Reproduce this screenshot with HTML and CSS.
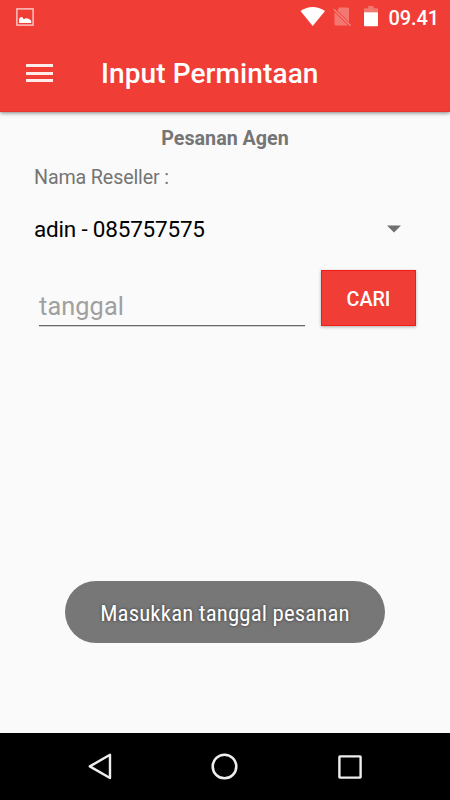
FILE: index.html
```
<!DOCTYPE html>
<html lang="id">
<head>
<meta charset="utf-8">
<title>Input Permintaan</title>
<link rel="stylesheet" href="styles.css">
</head>
<body>
<div class="screen">
  <header class="top">
    <div class="status">
      <svg class="status-picture" width="18" height="18" viewBox="0 0 18 18"><rect x=".9" y=".9" width="16.2" height="16.2" fill="none" stroke="#fff" stroke-opacity=".8" stroke-width="1.3"/><path d="M3 15V11Q4 9 5.6 9Q6.8 9 7.6 11.2Q9 10.2 11.2 10.2Q14.5 11.5 15.2 12.8V15z" fill="#fff"/></svg>
      <div class="status-right">
        <svg class="wifi" width="26" height="20" viewBox="0 0 26 20"><path d="M.5 5Q12.7-3.2 25 5L12.7 20z" fill="#fff"/></svg>
        <svg class="nosim" width="19" height="20" viewBox="0 0 19 20"><path d="M6.3 .6H14.5Q16 .6 16 2.1V15L4.3 3.4zM1.5 5 15 18.5H3Q1.5 18.5 1.5 17z" fill="#fff" fill-opacity=".3"/><path d="M.8 2.2 17.5 18.6" stroke="#fff" stroke-opacity=".35" stroke-width="1.5"/></svg>
        <svg class="battery" width="14" height="21" viewBox="0 0 14 21"><path d="M0 6.2V3.2Q0 2.3 1 2.3H4.3V0H9.5V2.3H13Q14 2.3 14 3.2V6.2z" fill="#fff" fill-opacity=".3"/><path d="M0 6.2H14V19.5Q14 20.3 13 20.3H1Q0 20.3 0 19.5z" fill="#fff"/></svg>
        <span class="clock">09.41</span>
      </div>
    </div>
    <div class="bar">
      <div class="menu"><i></i><i></i><i></i></div>
      <h1>Input Permintaan</h1>
    </div>
  </header>
  <main class="content">
    <h2>Pesanan Agen</h2>
    <p class="label">Nama Reseller :</p>
    <div class="spinner"><span>adin - 085757575</span><svg width="14" height="8" viewBox="0 0 14 8"><path d="M0 .4H14L7 7.4z" fill="#6f6f6f"/></svg></div>
    <div class="search">
      <div class="field">tanggal</div>
      <button class="submit">CARI</button>
    </div>
    <div class="toast"><span>Masukkan tanggal pesanan</span></div>
  </main>
  <nav class="nav">
    <svg width="24" height="27" viewBox="0 0 24 27"><path d="M22 1.8V25L1.8 13.4z" fill="none" stroke="#eee" stroke-width="2.4" stroke-linejoin="round"/></svg>
    <svg class="home" width="27" height="27" viewBox="0 0 27 27"><circle cx="13.5" cy="13.5" r="11.8" fill="none" stroke="#eee" stroke-width="2.6"/></svg>
    <svg width="24" height="24" viewBox="0 0 24 24"><rect x="1.4" y="1.4" width="21.2" height="21.2" rx=".6" fill="none" stroke="#eee" stroke-width="2.4"/></svg>
  </nav>
</div>
</body>
</html>
```
FILE: styles.css
```
* { box-sizing: border-box; }
body { margin: 0; font-family: Roboto, sans-serif; }
h1, h2, p { margin: 0; }
svg { display: block; flex: none; }
.screen { width: 450px; height: 800px; display: flex; flex-direction: column; background: #fafafa; overflow: hidden; }
.top { height: 112px; flex: none; background: #f03e36; border-bottom: 1px solid #e8372f; box-shadow: 0 1px 4px rgba(0,0,0,.5); }
.status { height: 34px; display: flex; justify-content: space-between; align-items: flex-start; padding: 0 11px 0 16px; color: #fff; }
.status-picture { margin-top: 8px; }
.status-right { display: flex; align-items: flex-start; }
.wifi { margin: 6px 7px 0 0; }
.nosim { margin: 7px 12px 0 0; }
.battery { margin: 6px 10px 0 0; }
.clock { font-size: 20px; font-weight: 500; line-height: 24px; margin-top: 6px; letter-spacing: -.1px; }
.bar { height: 78px; display: flex; align-items: center; padding: 1px 0 0 26px; }
.menu { width: 27px; display: grid; gap: 4.5px; margin: 0 49px 1px 0; }
.menu i { height: 3px; background: #fff; opacity: .9; }
h1 { color: #fff; font-size: 28px; line-height: 34px; font-weight: 500; letter-spacing: .1px; margin: 1px 0 0 -1px; }
.content { flex: 1; display: flex; flex-direction: column; padding: 14px 34px 0; }
h2 { text-align: center; font-size: 19.7px; line-height: 26px; font-weight: 700; color: #757575; }
.label { margin-top: 13px; font-size: 19.7px; line-height: 26px; letter-spacing: -.15px; color: #757575; }
.spinner { margin-top: 22px; height: 32px; display: flex; align-items: center; justify-content: space-between; padding-right: 15px; font-size: 22.5px; letter-spacing: -.2px; color: #000; }
.search { margin-top: 25px; display: flex; justify-content: space-between; align-items: flex-start; padding-left: 5px; }
.field { width: 266px; height: 56px; border-bottom: 1px solid #686868; box-shadow: 0 1px 0 #d0d0d0; font-size: 25.3px; line-height: 74px; letter-spacing: .1px; color: #a0a0a0; }
.submit { width: 95px; height: 56px; border: 1px solid #f51b12; background: #f03e36; color: #fff; font: 500 19.7px/56px Roboto, sans-serif; padding: 1px 0 0; box-shadow: 0 1px 3px rgba(0,0,0,.3); }
.toast { margin: 255px auto 0; width: 320px; height: 62px; border-radius: 31px; background: #777; color: #fff; display: flex; align-items: center; justify-content: center; padding-top: 2px; font: 22.8px "Roboto Condensed", Roboto, sans-serif; font-stretch: condensed; letter-spacing: .14px; text-shadow: 0 0 3px rgba(0,0,0,.6); white-space: nowrap; }
.nav { height: 67px; flex: none; background: #000; display: flex; align-items: center; justify-content: space-between; padding: 0 88px; }
.home { margin-right: 2px; }
```
